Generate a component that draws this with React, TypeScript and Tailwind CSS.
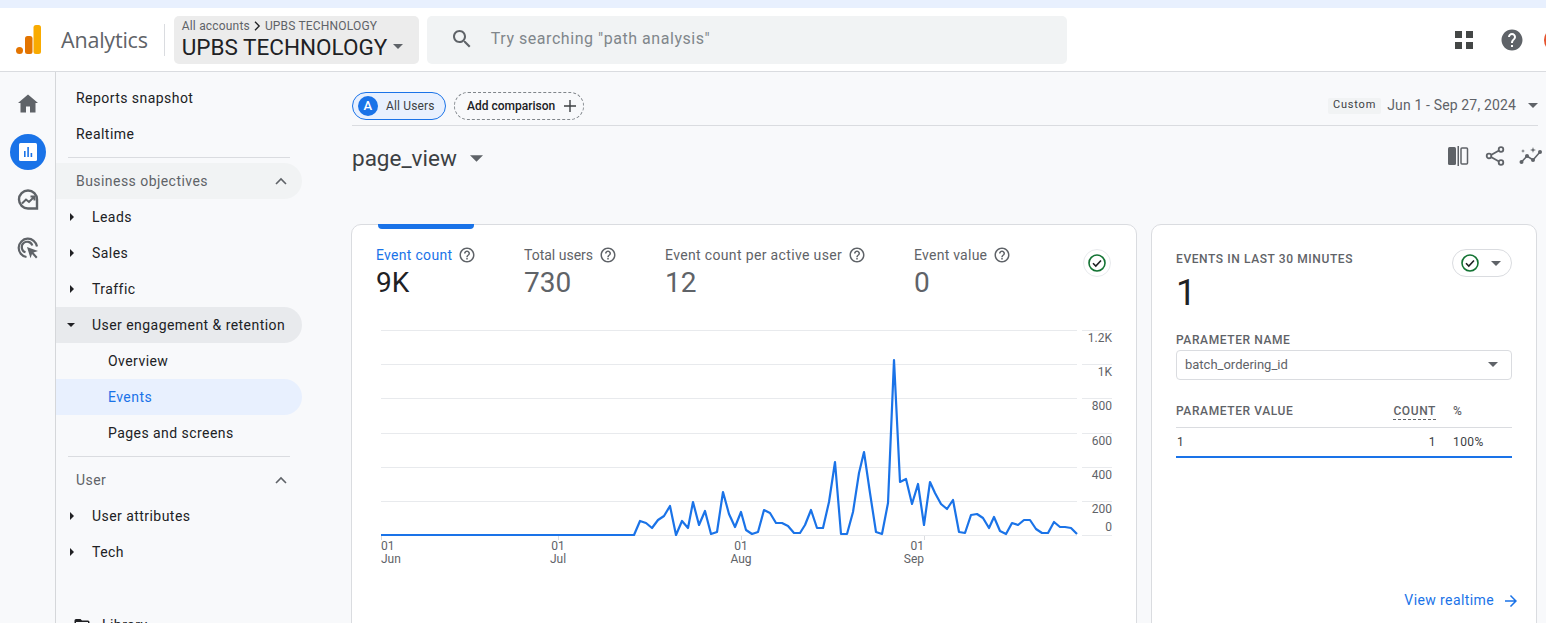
import type { ReactNode } from 'react';

// page coordinates of the event count line, read off the screenshot
const linePoints = [
  [381, 535], [634, 535], [640, 521], [646, 523], [652, 528], [658, 520], [664, 516], [670, 506], [676, 535],
  [682, 521], [688, 528], [693, 502], [699, 525], [705, 511], [711, 534], [717, 532], [723, 492], [729, 514],
  [735, 527], [741, 512], [746, 530], [752, 534], [758, 532], [764, 510], [770, 513], [776, 523], [782, 523],
  [788, 526], [794, 533], [800, 533], [805, 525], [811, 510], [817, 528], [823, 528], [829, 502], [835, 462],
  [841, 534], [847, 534], [853, 512], [859, 473], [864, 452], [870, 493], [876, 532], [882, 534], [888, 503],
  [894, 360], [900, 482], [906, 479], [912, 504], [918, 484], [924, 525], [930, 482], [935, 493], [941, 504],
  [947, 509], [953, 500], [959, 532], [965, 533], [971, 515], [977, 514], [983, 518], [989, 528], [994, 517],
  [1000, 531], [1006, 534], [1012, 523], [1018, 525], [1024, 520], [1030, 520], [1036, 529], [1042, 533],
  [1048, 533], [1054, 522], [1060, 527], [1065, 527], [1071, 528], [1077, 534],
];

const gridLines = [330, 364, 398, 433, 467, 501, 535];
const yLabels = [
  ['1.2K', 342], ['1K', 376], ['800', 410], ['600', 445], ['400', 479], ['200', 513], ['0', 531],
] as const;
const xLabels = [
  { x: 381, day: '01', month: 'Jun', anchor: 'start', tick: 381 },
  { x: 558, day: '01', month: 'Jul', anchor: 'middle', tick: 558 },
  { x: 741, day: '01', month: 'Aug', anchor: 'middle', tick: 741 },
  { x: 924, day: '01', month: 'Sep', anchor: 'end', tick: 924 },
] as const;

const HELP_OUTLINE =
  'M11 18h2v-2h-2v2zm1-16C6.48 2 2 6.48 2 12s4.48 10 10 10 10-4.48 10-10S17.52 2 12 2zm0 18c-4.41 0-8-3.59-8-8s3.59-8 8-8 8 3.59 8 8-3.59 8-8 8zm0-14c-2.21 0-4 1.79-4 4h2c0-1.1.9-2 2-2s2 .9 2 2c0 2-3 1.75-3 5h2c0-2.25 3-2.5 3-5 0-2.21-1.79-4-4-4z';

const HelpIcon = () => (
  <svg viewBox="0 0 24 24" className="h-[18px] w-[18px] shrink-0 fill-[#5f6368]">
    <path d={HELP_OUTLINE} />
  </svg>
);

const Caret = ({ className = 'h-[5px] w-[10px]' }: { className?: string }) => (
  <svg viewBox="0 0 10 5" className={`shrink-0 fill-[#5f6368] ${className}`}>
    <path d="M0 0h10L5 5z" />
  </svg>
);

const ChevronUp = () => (
  <svg viewBox="0 0 12 8" className="h-2 w-3 fill-none stroke-[#5f6368] stroke-[1.6]">
    <path d="M1 7l5-5 5 5" />
  </svg>
);

const CheckCircle = () => (
  <svg viewBox="0 0 18 18" className="h-[18px] w-[18px] fill-none">
    <circle cx="9" cy="9" r="8" stroke="#137333" strokeWidth="1.6" />
    <path d="M5 9.300l2.800 2.800 5.200-5.600" stroke="#202124" strokeWidth="1.600" />
  </svg>
);

const Logo = () => (
  <svg viewBox="0 0 28 30" className="h-[30px] w-[28px]">
    <circle cx="4.500" cy="25.500" r="3.500" fill="#e37400" />
    <rect x="10" y="11" width="7.500" height="18" rx="2.500" fill="#e37400" />
    <rect x="18.500" y="0" width="7.500" height="29" rx="2.500" fill="#f9ab00" />
  </svg>
);

const Rail = () => (
  <div className="flex w-14 shrink-0 flex-col items-center border-r border-[#d5d7da] pl-[1px] pt-[14px]">
    <div className="flex h-9 w-9 items-center justify-center">
      <svg viewBox="0 0 24 24" className="h-6 w-6 fill-[#5f6368]">
        <path d="M10 20.500v-6h4v6h5.500V11H22L12 2.500 2 11h2.500v9.500z" />
      </svg>
    </div>
    <div className="mt-3 flex h-9 w-9 items-center justify-center rounded-full bg-[#1a73e8]">
      <svg viewBox="0 0 20 20" className="h-5 w-5">
        <rect x="1" y="1" width="18" height="18" rx="1.500" fill="#fff" />
        <path d="M6 9v6h1.600V9zM9.300 5v10h1.600V5zM12.600 11v4h1.600v-4z" fill="#1a73e8" />
      </svg>
    </div>
    <div className="mt-3 flex h-9 w-9 items-center justify-center">
      <svg viewBox="0 0 24 24" className="h-6 w-6 fill-none stroke-[#5f6368] stroke-[2.4]">
        <path d="M21 20.500h-9a9 9 0 1 1 9-9z" />
        <path d="M6 15.500l4-4 3 2.500 5-5M14.500 8.500H18.500V12.500" strokeWidth="2" />
      </svg>
    </div>
    <div className="mt-3 flex h-9 w-9 items-center justify-center">
      <svg viewBox="0 0 24 24" className="h-6 w-6 fill-none stroke-[#5f6368] stroke-[2.2]">
        <path d="M21 10.500A9.200 9.200 0 1 0 10.500 21" />
        <path d="M16.300 9.500a5.400 5.400 0 1 0-6.800 6.800" />
        <path d="M11 11l11 4-4.500 1.500L21.500 21 20 22.500 16 18l-1.500 4.200z" fill="#5f6368" stroke="none" />
      </svg>
    </div>
  </div>
);

const NavHeader = ({ label, shaded }: { label: string; shaded?: boolean }) => (
  <div className={`flex h-9 items-center justify-between rounded-r-[18px] pl-5 pr-[15px] text-[#5f6368] ${shaded ? 'bg-[#f1f3f4]' : ''}`}>
    <span>{label}</span>
    <ChevronUp />
  </div>
);

const NavBranch = ({ label, open }: { label: string; open?: boolean }) => (
  <div className={`flex h-9 items-center rounded-r-[18px] pl-[11px] text-[#202124] ${open ? 'bg-[#e8eaed]' : ''}`}>
    <span className="flex w-[25px] items-center">
      {open ? (
        <svg viewBox="0 0 8 4" className="h-1 w-2 fill-[#202124]"><path d="M0 0h8L4 4z" /></svg>
      ) : (
        <svg viewBox="0 0 4 8" className="ml-[3px] h-2 w-1 fill-[#202124]"><path d="M0 0v8l4-4z" /></svg>
      )}
    </span>
    {label}
  </div>
);

const NavLeaf = ({ label, active }: { label: string; active?: boolean }) => (
  <div className={`flex h-9 items-center rounded-r-[18px] pl-[52px] ${active ? 'bg-[#e8f0fe] text-[#1a73e8]' : 'text-[#202124]'}`}>
    {label}
  </div>
);

const Sidebar = () => (
  <nav className="w-[246px] shrink-0 pt-[8px] font-['Roboto',sans-serif] text-[14px] tracking-[0.45px]">
    <div className="flex h-9 items-center pl-5 text-[#202124]">Reports snapshot</div>
    <div className="flex h-9 items-center pl-5 text-[#202124]">Realtime</div>
    <div className="mx-[12px] mb-[5px] mt-[5px] border-t border-[#dadce0]" />
    <NavHeader label="Business objectives" shaded />
    <NavBranch label="Leads" />
    <NavBranch label="Sales" />
    <NavBranch label="Traffic" />
    <NavBranch label="User engagement & retention" open />
    <NavLeaf label="Overview" />
    <NavLeaf label="Events" active />
    <NavLeaf label="Pages and screens" />
    <div className="mx-[12px] mb-[5px] mt-[5px] border-t border-[#dadce0]" />
    <NavHeader label="User" />
    <NavBranch label="User attributes" />
    <NavBranch label="Tech" />
    <div className="mt-[37px] flex h-9 items-center pl-[17px] text-[#202124]">
      <svg viewBox="0 0 24 24" className="mr-[11px] h-[18px] w-[18px] fill-[#202124]">
        <path d="M20 6h-8l-2-2H4a2 2 0 0 0-2 2v12a2 2 0 0 0 2 2h16a2 2 0 0 0 2-2V8a2 2 0 0 0-2-2zm0 12H4V8h16z" />
      </svg>
      Library
    </div>
  </nav>
);

const Metric = ({ label, value, active, className, tracking }: { label: string; value: string; active?: boolean; className: string; tracking: string }) => (
  <div className={className}>
    <div className={`flex h-[20px] items-center gap-[6px] text-[14px] ${tracking} ${active ? 'text-[#1a73e8]' : 'text-[#5f6368]'}`}>
      {label}
      <HelpIcon />
    </div>
    <div className={`text-[28px] leading-[36px] ${active ? 'text-[#202124]' : 'text-[#5f6368]'}`}>{value}</div>
  </div>
);

const Chart = () => (
  <svg viewBox="376 325 740 245" className="ml-[24px] mt-[24px] block h-[245px] w-[740px]">
    {gridLines.map((y) => (
      <g key={y} stroke="#e8eaed" strokeWidth="1">
        <line x1="381" x2="1077" y1={y + 0.5} y2={y + 0.5} />
        <line x1="1082" x2="1112" y1={y + 0.5} y2={y + 0.5} />
      </g>
    ))}
    <polyline
      points={linePoints.map((p) => p.join(',')).join(' ')}
      fill="none"
      stroke="#1a73e8"
      strokeWidth="2.2"
      strokeLinejoin="round"
    />
    <g fontFamily="Roboto, sans-serif" fontSize="12" fill="#5f6368">
      {yLabels.map(([text, y]) => (
        <text key={text} x="1112" y={y} textAnchor="end">{text}</text>
      ))}
      {xLabels.map((l) => (
        <g key={l.month}>
          <line x1={l.tick + 0.5} x2={l.tick + 0.5} y1="536" y2="540" stroke="#dadce0" />
          <text x={l.x} y="550" textAnchor={l.anchor}>{l.day}</text>
          <text x={l.x} y="563" textAnchor={l.anchor}>{l.month}</text>
        </g>
      ))}
    </g>
  </svg>
);

const TinyHead = ({ children, className = '' }: { children: ReactNode; className?: string }) => (
  <div className={`text-[12px] font-medium leading-4 tracking-[0.6px] text-[#5f6368] ${className}`}>{children}</div>
);

const RealtimeCard = () => (
  <div className="ml-[14px] flex h-[420px] w-[386px] shrink-0 flex-col rounded-t-[10px] border border-[#dadce0] bg-white pl-[24px] pr-[24px] pt-[24px]">
    <div className="flex items-start justify-between">
      <div>
        <TinyHead className="mt-[2px]">EVENTS IN LAST 30 MINUTES</TinyHead>
        <div className="mt-[6px] text-[36px] leading-[40px] text-[#202124]">1</div>
      </div>
      <div className="flex h-[28px] w-[60px] items-center gap-[12px] rounded-full border border-[#dadce0] pl-2">
        <CheckCircle />
        <Caret />
      </div>
    </div>
    <TinyHead className="mt-[19px]">PARAMETER NAME</TinyHead>
    <div className="mt-[2px] flex h-[30px] items-center justify-between rounded-[4px] border border-[#dadce0] pb-[1px] pl-2 pr-[13px] text-[13px] text-[#5f6368]">
      batch_ordering_id
      <Caret />
    </div>
    <div className="mt-[23px] flex h-[25px] items-start border-b border-[#dadce0]">
      <TinyHead className="flex-1">PARAMETER VALUE</TinyHead>
      <TinyHead className="border-b border-dashed border-[#5f6368]">COUNT</TinyHead>
      <TinyHead className="ml-[17px] w-[59px]">%</TinyHead>
    </div>
    <div className="flex h-[30px] items-center border-b-2 border-[#1a73e8] text-[12px] tracking-[0.4px] text-[#3c4043]">
      <span className="flex-1 pl-[1px]">1</span>
      <span>1</span>
      <span className="ml-[17px] w-[59px]">100%</span>
    </div>
    <div className="-mr-[8px] mt-[132px] flex items-center justify-end gap-[8px] text-[14px] tracking-[0.4px] text-[#1a73e8]">
      View realtime
      <svg viewBox="0 0 24 24" className="h-[18px] w-[18px] fill-[#1a73e8]">
        <path d="M12 4l-1.410 1.410L16.170 11H4v2h12.170l-5.580 5.590L12 20l8-8z" />
      </svg>
    </div>
  </div>
);

export default function App() {
  return (
    <div className="flex h-screen flex-col overflow-hidden bg-[#f8f9fb] font-['Roboto',sans-serif]">
      <div className="h-2 shrink-0 bg-[#e8f0fe]" />
      <header className="flex h-[64px] shrink-0 items-center border-b border-[#dadce0] bg-white">
        <div className="ml-[15px] w-[46px] shrink-0 pt-[1px]"><Logo /></div>
        <span className="pt-[2px] font-['Open_Sans',sans-serif] text-[21.500px] tracking-[-0.2px] text-[#5f6368]">Analytics</span>
        <div className="ml-[16px] h-8 border-l border-[#dadce0]" />
        <div className="ml-[9px] h-12 w-[245px] shrink-0 rounded-[5px] bg-[#ececec] pl-2 pt-[3px]">
          <div className="flex h-[14px] items-center text-[12px] tracking-[0.18px] text-[#5f6368]">
            All accounts
            <svg viewBox="0 0 8 12" className="mx-[4px] h-[10px] w-[7px] fill-none stroke-[#202124] stroke-[1.6]"><path d="M1 1l5 5-5 5" /></svg>
            UPBS TECHNOLOGY
          </div>
          <div className="flex items-center gap-[6px] text-[22.500px] leading-7 text-[#202124]">
            UPBS TECHNOLOGY
            <Caret />
          </div>
        </div>
        <div className="ml-2 flex h-12 w-[640px] shrink-0 items-center rounded-[5px] bg-[#f1f3f4] pb-[1px] pl-[23px] text-[16px] tracking-[0.55px] text-[#80868b]">
          <svg viewBox="0 0 24 24" className="mr-[17px] h-6 w-6 fill-[#5f6368]">
            <path d="M15.500 14h-.79l-.28-.27C15.410 12.590 16 11.110 16 9.500 16 5.910 13.090 3 9.500 3S3 5.910 3 9.500 5.910 16 9.500 16c1.610 0 3.090-.59 4.230-1.570l.27.28v.79l5 4.990L20.490 19l-4.990-5zm-6 0C7.010 14 5 11.990 5 9.500S7.010 5 9.500 5 14 7.010 14 9.500 11.990 14 9.500 14z" />
          </svg>
          Try searching "path analysis"
        </div>
        <svg viewBox="0 0 18 18" className="ml-[388px] h-[18px] w-[18px] shrink-0 fill-[#444746]">
          <path d="M0 0h7v7H0zM11 0h7v7h-7zM0 11h7v7H0zM11 11h7v7h-7z" />
        </svg>
        <svg viewBox="0 0 24 24" className="ml-[27px] h-6 w-6 shrink-0 fill-[#5f6368]">
          <path d="M12 1.500C6.200 1.500 1.500 6.200 1.500 12S6.200 22.500 12 22.500 22.500 17.800 22.500 12 17.800 1.500 12 1.500zm1 17.500h-2v-2h2v2zm2.070-7.750l-.9.92C13.450 12.900 13 13.500 13 15h-2v-.5c0-1.100.45-2.100 1.170-2.830l1.240-1.260c.37-.36.59-.86.59-1.410 0-1.100-.9-2-2-2s-2 .9-2 2H8c0-2.210 1.790-4 4-4s4 1.790 4 4c0 .88-.36 1.680-.93 2.250z" />
        </svg>
        <div className="ml-[20px] h-6 w-6 shrink-0 rounded-full bg-[#e5532d]" />
      </header>

      <div className="flex min-h-0 flex-1">
        <Rail />
        <Sidebar />
        <main className="w-[1244px] shrink-0 pl-[49px]">
          <div className="ml-[1px] mr-[8px] flex h-[54px] items-start justify-between border-b border-[#dadce0] pt-[20px]">
            <div className="flex items-center gap-2">
              <div className="flex h-[28px] w-[94px] items-center rounded-full border border-[#1a73e8] bg-[#e8f0fe] pl-[5px] text-[12px] tracking-[0.15px] text-[#3c4043]">
                <span className="mr-[8px] flex h-5 w-5 items-center justify-center rounded-full bg-[#1a73e8] text-[13px] font-medium text-white">A</span>
                All Users
              </div>
              <div className="flex h-[28px] w-[130px] items-center rounded-full border border-dashed border-[#80868b] pl-[12px] text-[12px] font-medium text-[#202124]">
                Add comparison
                <svg viewBox="0 0 14 14" className="ml-[8px] h-[14px] w-[14px] fill-none stroke-[#3c4043] stroke-[1.4]"><path d="M7 1v12M1 7h12" /></svg>
              </div>
            </div>
            <div className="mt-[3px] flex items-center">
              <span className="flex h-[16px] items-center rounded-[2px] bg-[#f1f3f4] px-[5px] text-[11px] tracking-[0.8px] text-[#3c4043]">Custom</span>
              <span className="ml-[6px] text-[14px] tracking-[0.15px] text-[#5f6368]">Jun 1 - Sep 27, 2024</span>
              <Caret className="ml-[12px] h-[5px] w-[10px]" />
            </div>
          </div>

          <div className="flex h-[98px] items-start justify-between pl-[1px]">
            <div className="mt-[16px] flex items-center gap-[13px] text-[22.500px] leading-8 text-[#3c4043]">
              page_view
              <Caret className="h-[7px] w-[13px]" />
            </div>
            <div className="mr-[3px] mt-[20px] flex items-center gap-[14px]">
              <svg viewBox="0 0 21 20" className="h-5 w-[21px]">
                <rect x="0" y="1" width="8" height="18" rx="1.500" fill="#5f6368" />
                <rect x="9.500" y="0" width="1.500" height="20" fill="#5f6368" />
                <rect x="13" y="2" width="6.500" height="16" rx="1" fill="none" stroke="#5f6368" strokeWidth="1.500" />
              </svg>
              <svg viewBox="0 0 20 20" className="ml-[2px] h-5 w-5 fill-none stroke-[#5f6368] stroke-[1.8]">
                <circle cx="16" cy="3.500" r="2.300" />
                <circle cx="4" cy="10" r="2.300" />
                <circle cx="16" cy="16.500" r="2.300" />
                <path d="M6 9l8-4.500M6 11l8 4.500" />
              </svg>
              <svg viewBox="0 0 24 20" className="h-5 w-6 fill-[#5f6368]">
                <circle cx="2.500" cy="16" r="2" />
                <circle cx="8" cy="10" r="2" />
                <circle cx="14" cy="14" r="2" />
                <circle cx="21" cy="6" r="2" />
                <path d="M2.500 16L8 10l6 4 7-8" fill="none" stroke="#5f6368" strokeWidth="1.600" />
                <path d="M14 1l.7 2.300L17 4l-2.300.7L14 7l-.7-2.300L11 4l2.300-.7zM4 3l.5 1.500L6 5l-1.500.5L4 7l-.5-1.500L2 5l1.500-.5z" />
              </svg>
            </div>
          </div>

          <div className="flex">
            <div className="relative h-[420px] w-[786px] shrink-0 rounded-t-[10px] border border-[#dadce0] bg-white">
              <div className="absolute left-[26px] top-[-1px] h-[5px] w-[96px] rounded-b-[4px] bg-[#1a73e8]" />
              <div className="flex pl-[24px] pt-[20px]">
                <Metric label="Event count" value="9K" active tracking="tracking-[0.3px]" className="w-[148px]" />
                <Metric label="Total users" value="730" tracking="tracking-[0px]" className="w-[141px]" />
                <Metric label="Event count per active user" value="12" tracking="tracking-[0.35px]" className="w-[249px]" />
                <Metric label="Event value" value="0" tracking="tracking-[0.25px]" className="w-[170px]" />
                <div className="-ml-[1px] mt-[4px] flex h-[28px] w-[28px] items-center justify-center rounded-full border border-[#e8eaed]">
                  <CheckCircle />
                </div>
              </div>
              <Chart />
            </div>
            <RealtimeCard />
          </div>
        </main>
      </div>
    </div>
  );
}
